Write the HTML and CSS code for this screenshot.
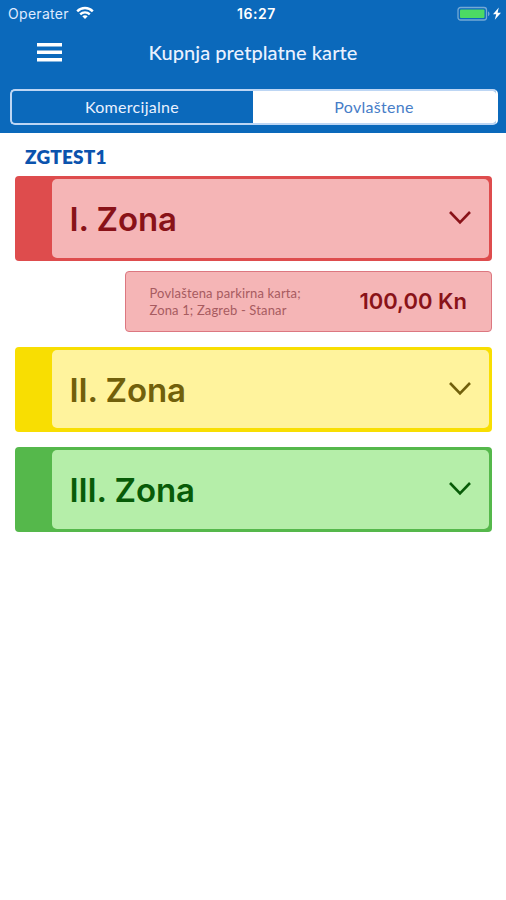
FILE: index.html
```html
<!DOCTYPE html>
<html lang="hr">
<head>
<meta charset="utf-8">
<title>Kupnja pretplatne karte</title>
<link rel="stylesheet" href="styles.css">
</head>
<body>
<header class="header">
  <div class="status">
    <div class="carrier"><span class="carrier-name">Operater</span>
      <svg class="wifi" width="18" height="14" viewBox="0 0 18 14" fill="none" stroke="#fff" stroke-width="2.4"><path d="M1.2 5.3C5.5.8 12.500.8 16.800 5.300M4.200 8.400c2.700-2.700 6.900-2.700 9.600 0"/><path d="M9 13L6.300 10.300c1.500-1.400 3.900-1.400 5.400 0z" fill="#fff" stroke="none"/></svg>
    </div>
    <span class="time">16:27</span>
    <div class="power">
      <svg width="45" height="16" viewBox="0 0 45 16"><rect x="1" y="1.500" width="28.500" height="12.500" rx="2.500" fill="none" stroke="#74a9d5" stroke-width="1.300"/><rect x="3" y="3.500" width="24.500" height="8.500" rx="1" fill="#4cda64"/><path d="M31 5.500c2 .7 2 4 0 4.700z" fill="#74a9d5"/><path d="M41.800 1.500L36 8.300h3.200L37.800 13.700 44 6.800h-3.400z" fill="#fff"/></svg>
    </div>
  </div>
  <div class="navbar">
    <svg class="menu" width="25" height="19" viewBox="0 0 25 19" fill="#fff"><path d="M0 0h25v3.400H0zM0 7.500h25v3.400H0zM0 15h25v3.400H0z"/></svg>
    <h1 class="title">Kupnja pretplatne karte</h1>
  </div>
  <div class="tabs"><div class="tab">Komercijalne</div><div class="tab selected">Povlaštene</div></div>
</header>
<main class="content">
  <h2 class="plate">ZGTEST1</h2>
  <section class="zone red"><div class="zone-body"><span class="zone-name">I. Zona</span><svg class="chevron" width="24" height="16" viewBox="0 0 24 16"><path d="M2 2l10 10.300L22 2"/></svg></div></section>
  <div class="ticket"><p class="description">Povlaštena parkirna karta;<br>Zona 1; Zagreb - Stanar</p><span class="price">100,00 Kn</span></div>
  <section class="zone yellow"><div class="zone-body"><span class="zone-name">II. Zona</span><svg class="chevron" width="24" height="16" viewBox="0 0 24 16"><path d="M2 2l10 10.300L22 2"/></svg></div></section>
  <section class="zone green"><div class="zone-body"><span class="zone-name">III. Zona</span><svg class="chevron" width="24" height="16" viewBox="0 0 24 16"><path d="M2 2l10 10.300L22 2"/></svg></div></section>
</main>
</body>
</html>
```
FILE: styles.css
```css
* { box-sizing: border-box; }
body { margin: 0; min-height: 900px; background: #fff; font-family: Lato, sans-serif; }
h1, h2, p { margin: 0; }
svg { display: block; flex: none; }
.header { height: 133px; background: #0b69bb; color: #fff; }
.status { height: 27px; display: grid; grid-template-columns: 1fr auto 1fr; align-items: center; padding: 0 4px 0 8px; }
.carrier { display: flex; align-items: center; gap: 7px; font: 14px/20px Inter, sans-serif; }
.carrier-name { color: #dfeaff; letter-spacing: .3px; }
.wifi { margin-top: -2px; }
.time { font: 600 14px/20px Inter, sans-serif; letter-spacing: .55px; padding-left: 3px; }
.power { display: flex; justify-content: flex-end; }
.navbar { height: 62px; display: grid; grid-template-columns: 1fr auto 1fr; align-items: center; padding: 0 0 12px; }
.menu { margin-left: 37px; }
.title { font-size: 20px; line-height: 24px; font-weight: 500; color: #eaf1ff; letter-spacing: .05px; }
.tabs { height: 36px; margin: -.5px 8.500px 0 9.500px; display: flex; border: 2px solid #bdd6f4; border-right-color: #fff; border-radius: 5px; background: #0b69bb; background-clip: padding-box; overflow: hidden; }
.tab { flex: 0 0 241px; display: flex; align-items: center; justify-content: center; font-size: 16px; color: #eaf1ff; letter-spacing: .3px; }
.selected { flex: 1; background: #fff; color: #477dc8; }
.content { padding: 13px 14px 0 15px; }
.plate { height: 30px; margin-left: 10px; color: #0b53ad; font-size: 19px; line-height: 22px; font-weight: 800; letter-spacing: .15px; }
.zone { height: 85px; padding: 3px 3px 3.500px 36.500px; border-radius: 4px; margin-bottom: 15.500px; }
.zone-body { height: 100%; border-radius: 5px; display: flex; align-items: center; justify-content: space-between; padding: 0 17.500px 0 18px; }
.zone-name { font: 600 33px/42px Inter, sans-serif; letter-spacing: -.1px; padding-top: 2px; }
.chevron { fill: none; stroke: currentColor; stroke-width: 2.600px; }
.red { background: #de4c4d; color: #891218; margin-bottom: 10px; }
.red .zone-body { background: #f5b5b6; }
.yellow { background: #f8de02; color: #71600b; }
.yellow .zone-body { background: #fff39d; }
.green { background: #55b84b; color: #085b08; }
.green .zone-body { background: #b5eea9; }
.ticket { height: 61px; margin: 0 0 14.500px 110px; padding: 0 24px 0 23.500px; border: 1.500px solid #dc7780; border-radius: 4px; background: #f5b5b6; display: flex; align-items: center; justify-content: space-between; color: #891218; }
.description { color: #a75b60; font-size: 13px; line-height: 17px; letter-spacing: .15px; white-space: nowrap; }
.price { font: 600 22px/28px Inter, sans-serif; white-space: nowrap; margin-top: -1px; }
```
